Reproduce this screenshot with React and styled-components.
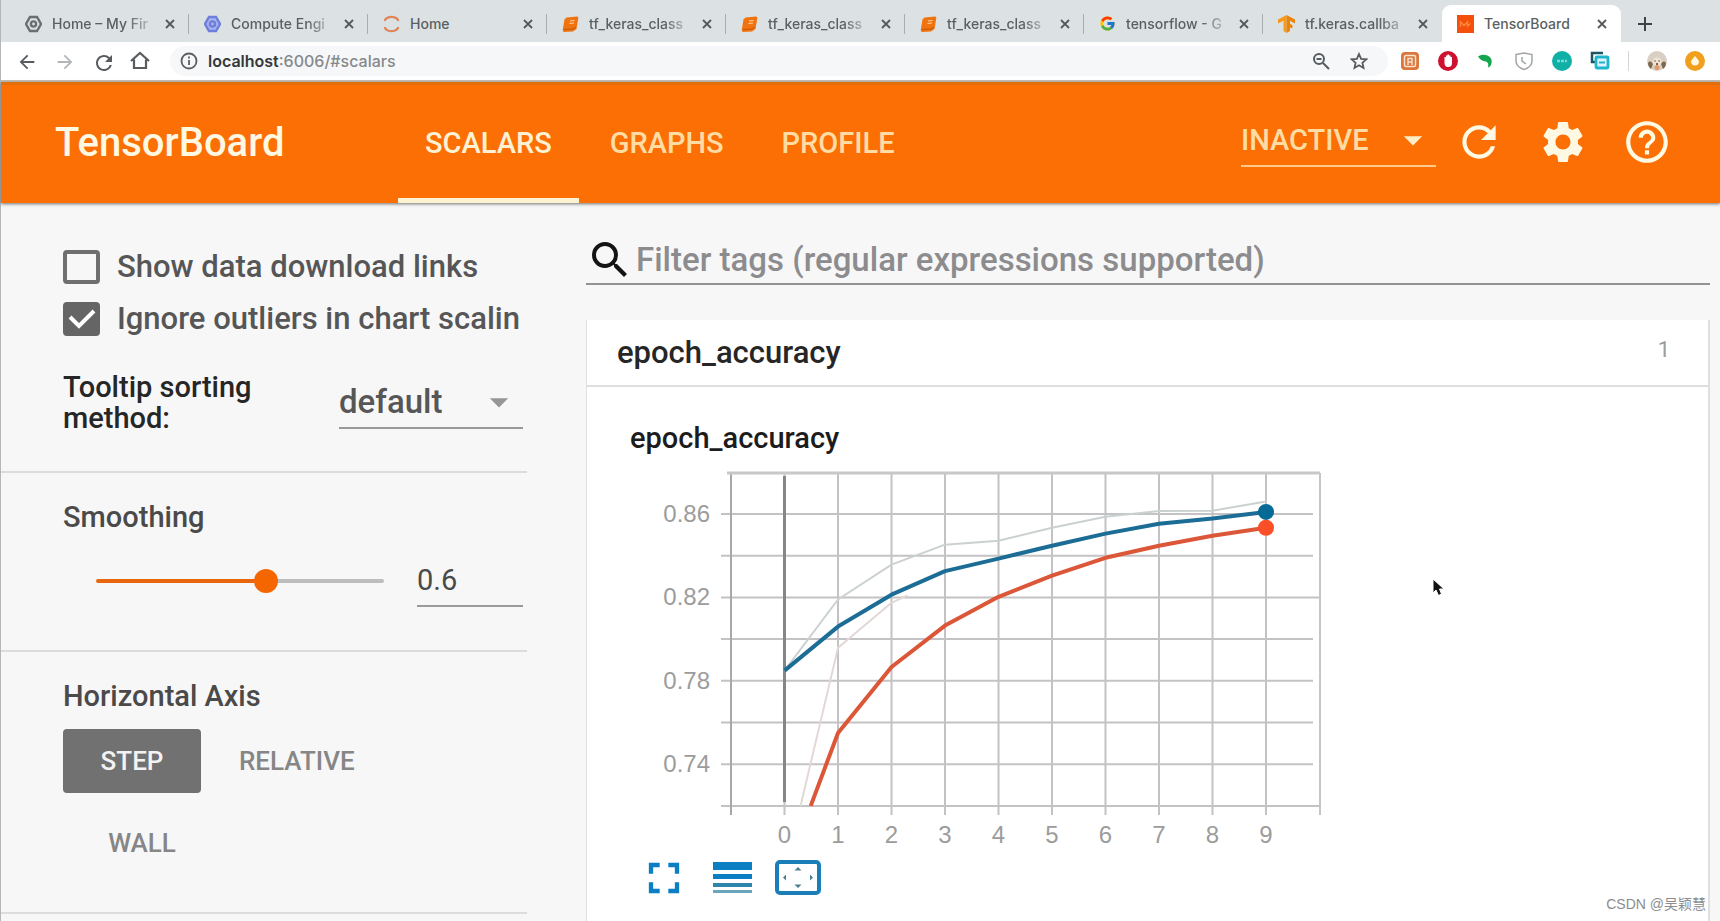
import React from "react";
import styled, { createGlobalStyle } from "styled-components";
import {
  MdRefresh,
  MdSettings,
  MdHelpOutline,
  MdSearch,
  MdArrowDropDown,
  MdArrowBack,
  MdArrowForward,
  MdFullscreen,
} from "react-icons/md";
import { FcGoogle } from "react-icons/fc";

const GlobalStyle = createGlobalStyle`
  *, *::before, *::after { box-sizing: border-box; }
  body {
    margin: 0;
    background: #f7f7f8;
    font-family: Roboto, "Liberation Sans", sans-serif;
    overflow: hidden;
  }
  button, input, select { font: inherit; color: inherit; margin: 0; }
  button { border: 0; padding: 0; background: none; }
  svg { display: block; flex: none; }
`;

const Window = styled.div`
  min-height: 100vh;
  display: flex;
  flex-direction: column;
  position: relative;
  border-left: 1px solid #b4b6b8;
`;

/* ---------- browser chrome ---------- */

const TabStrip = styled.nav`
  height: 42px;
  flex: none;
  display: flex;
  align-items: flex-end;
  padding-left: 9px;
  background: #dce2e3;
  font-family: Inter, "Liberation Sans", sans-serif;
`;

const BrowserTab = styled.div`
  flex: 0 1 179px;
  min-width: 0;
  height: 37px;
  padding: 0 0 0 15px;
  display: flex;
  align-items: center;
  gap: 10px;
  border-radius: 9px 9px 0 0;
  background: ${(p) => (p.$active ? "#fff" : "transparent")};
`;

const TabTitle = styled.a`
  flex: 1;
  min-width: 0;
  overflow: hidden;
  white-space: nowrap;
  font-size: 14px;
  font-weight: 500;
  line-height: 20px;
  color: #5a5f62;
  text-decoration: none;
  mask-image: ${(p) => (p.$fade ? "linear-gradient(to right, #000 75%, rgba(0, 0, 0, 0.2))" : "none")};
`;

const TabClose = styled.button`
  display: grid;
  place-items: center;
  width: 16px;
  height: 20px;
  color: #54595c;
`;

const TabDivider = styled.span`
  width: 1px;
  height: 20px;
  background: ${(p) => (p.$hidden ? "transparent" : "#a9afb1")};
`;

const NewTab = styled.button`
  width: 48px;
  height: 37px;
  display: grid;
  place-items: center;
  color: #3d4143;
`;

const AddressBar = styled.div`
  height: 40px;
  flex: none;
  display: flex;
  align-items: center;
  gap: 18px;
  padding: 0 15px;
  background: #fff;
  border-bottom: 2px solid #c3bfb9;
`;

const ChromeButton = styled.button`
  width: 20px;
  height: 20px;
  display: grid;
  place-items: center;
  flex: none;
  color: ${(p) => (p.$dim ? "#b3b6b8" : "#585c5f")};
`;

const Omnibox = styled.div`
  flex: 1;
  min-width: 0;
  height: 30px;
  margin-left: 2px;
  padding: 0 19px 0 10px;
  display: flex;
  align-items: center;
  gap: 18px;
  border-radius: 15px;
  background: #f6f7f8;
  color: #5b5f62;
`;

const SiteAddress = styled.div`
  flex: 1;
  display: flex;
  align-items: center;
  gap: 10px;
  font-family: Inter, "Liberation Sans", sans-serif;
  font-size: 16px;
  line-height: 20px;
  font-weight: 500;
  color: #85898c;
  b { font-weight: 600; color: #35383a; }
`;

const Extensions = styled.div`
  display: flex;
  align-items: center;
  gap: 18px;
  margin-left: -6px;
`;

const ExtensionDivider = styled.span`
  width: 1px;
  height: 20px;
  background: #d3d5d6;
`;

/* ---------- TensorBoard header ---------- */

const Header = styled.header`
  height: 121px;
  flex: none;
  position: relative;
  z-index: 1;
  display: flex;
  align-items: center;
  padding: 0 48px 0 54px;
  border-top: 3px solid #e26f0c;
  background: #fb6f05;
  box-shadow: 0 1px 3px rgba(70, 70, 70, 0.75);
  color: #fff8e2;
`;

const Brand = styled.h1`
  margin: 0 0 2px;
  width: 343px;
  font-size: 40px;
  font-weight: 500;
  line-height: 44px;
`;

const Dashboards = styled.nav`
  align-self: stretch;
  display: flex;
  flex: 1;
  gap: 4px;
`;

const DashboardLink = styled.a`
  display: flex;
  align-items: center;
  padding: 0 27px 2px;
  border-top: 5px solid transparent;
  border-bottom: 5px solid ${(p) => (p.$active ? "#fdf3d2" : "transparent")};
  color: ${(p) => (p.$active ? "#fff2d4" : "#ffdca4")};
  font-size: 29px;
  font-weight: 500;
  line-height: 32px;
  text-decoration: none;
`;

const RunState = styled.label`
  width: 195px;
  height: 52px;
  margin: 0 18px 6px 0;
  display: flex;
  align-items: center;
  position: relative;
  border-bottom: 2px solid #ffc98a;
  color: #ffdca4;
  font-size: 29px;
  font-weight: 500;
  svg { position: absolute; right: 1px; color: #ffeec8; pointer-events: none; }
`;

const BareSelect = styled.select`
  appearance: none;
  width: 100%;
  border: 0;
  padding: 0;
  background: transparent;
  line-height: 38px;
  outline: 0;
`;

const HeaderActions = styled.div`
  display: flex;
  gap: 34px;
  margin-bottom: 4px;
`;

const HeaderAction = styled.button`
  width: 50px;
  height: 50px;
`;

/* ---------- sidebar ---------- */

const Body = styled.div`
  flex: 1;
  display: flex;
`;

const Sidebar = styled.aside`
  width: 526px;
  flex: none;
  color: #4a4a4a;
`;

const Section = styled.section`
  padding: ${(p) => p.$top}px 4px ${(p) => p.$bottom}px 62px;
  border-bottom: 2px solid #dcdcdc;
`;

const CheckRow = styled.label`
  display: flex;
  align-items: center;
  gap: 17px;
  height: 34px;
  margin-bottom: 18px;
  position: relative;
  font-size: 31px;
  font-weight: 500;
  line-height: 34px;
  white-space: nowrap;
  color: #565656;
  svg { position: absolute; left: 4px; top: 4px; pointer-events: none; }
`;

const CheckBox = styled.input`
  appearance: none;
  flex: none;
  width: 37px;
  height: 34px;
  border: 4px solid #6f6f6f;
  border-radius: 4px;
  &:checked { background: #656565; border-color: #656565; }
`;

const SortRow = styled.label`
  display: flex;
  align-items: center;
  justify-content: space-between;
  margin-top: 36px;
`;

const SortLabel = styled.span`
  width: 220px;
  font-size: 29px;
  font-weight: 500;
  line-height: 31px;
  color: #262626;
`;

const SortSelect = styled.span`
  width: 184px;
  height: 51px;
  display: flex;
  align-items: center;
  position: relative;
  border-bottom: 2px solid #9a9a9a;
  font-size: 33px;
  font-weight: 500;
  color: #565656;
  svg { position: absolute; right: 2px; color: #969696; pointer-events: none; }
`;

const SectionTitle = styled.h2`
  margin: 0;
  font-size: 29px;
  font-weight: 500;
  line-height: 32px;
  color: #4a4a4a;
`;

const SmoothingRow = styled.div`
  display: flex;
  align-items: center;
  justify-content: space-between;
  margin-top: 22px;
  padding-left: 33px;
`;

const Slider = styled.input`
  appearance: none;
  width: 288px;
  height: 26px;
  background: transparent;
  &::-webkit-slider-runnable-track {
    height: 4px;
    border-radius: 2px;
    background: linear-gradient(to right, #e8660c 60%, #bdbdbd 60%);
  }
  &::-webkit-slider-thumb {
    appearance: none;
    width: 24px;
    height: 24px;
    margin-top: -10px;
    border-radius: 50%;
    background: #f56600;
  }
`;

const SmoothingValue = styled.input`
  width: 106px;
  height: 52px;
  border: 0;
  border-bottom: 2px solid #9a9a9a;
  padding: 0;
  background: transparent;
  font-size: 29px;
`;

const AxisButtons = styled.div`
  display: flex;
  flex-wrap: wrap;
  gap: 18px 0;
  margin-top: 17px;
`;

const AxisButton = styled.button`
  min-width: 138px;
  height: 64px;
  padding: 0 28px;
  margin-left: ${(p) => (p.$selected ? 0 : 10)}px;
  border-radius: 4px;
  background: ${(p) => (p.$selected ? "#717171" : "transparent")};
  color: ${(p) => (p.$selected ? "#f3f3f3" : "#868686")};
  font-size: 26px;
  font-weight: 500;
`;

/* ---------- main pane ---------- */

const Main = styled.main`
  flex: 1;
  min-width: 0;
  display: flex;
  flex-direction: column;
  margin: 33px 10px 0 59px;
`;

const Filter = styled.label`
  height: 49px;
  display: flex;
  align-items: center;
  gap: 2px;
  border-bottom: 2px solid #939396;
  color: #141414;
`;

const FilterInput = styled.input`
  flex: 1;
  border: 0;
  padding: 0;
  background: transparent;
  outline: 0;
  font-size: 33px;
  font-weight: 500;
  line-height: 38px;
  &::placeholder { color: #8c8c8e; opacity: 1; }
`;

const Card = styled.section`
  flex: 1;
  margin-top: 35px;
  background: #fff;
  border: solid #e0e0e3;
  border-width: 0 2px 0 1px;
`;

const CardHeader = styled.header`
  height: 67px;
  display: flex;
  align-items: center;
  justify-content: space-between;
  padding: 0 38px 0 30px;
  border-bottom: 2px solid #dededf;
  h2 {
    margin: 0;
    font-size: 31px;
    font-weight: 500;
    line-height: 36px;
    color: #262626;
  }
`;

const TagCount = styled.span`
  font-size: 22px;
  line-height: 32px;
  padding-bottom: 6px;
  color: #9b9b9b;
`;

const ChartPane = styled.div`
  padding: 35px 42px 0 43px;
  h3 {
    margin: 0;
    font-size: 29px;
    font-weight: 500;
    line-height: 32px;
    color: #1c1c1c;
  }
`;

const ChartSvg = styled.svg`
  width: 700px;
  height: 396px;
  margin-top: 2px;
  text {
    font-family: "Liberation Sans", sans-serif;
    font-size: 24px;
    fill: #9c9c9c;
  }
`;

const ChartActions = styled.div`
  display: flex;
  align-items: center;
  gap: 23px;
  padding: 8px 0 0 8px;
  color: #0b7ec4;
  button { height: 36px; display: grid; place-items: center; align-content: center; }
`;

const Pointer = styled.svg`
  position: absolute;
  left: 1431px;
  top: 578px;
`;

const Watermark = styled.span`
  position: absolute;
  right: 14px;
  bottom: 6px;
  font-family: "Liberation Sans", "Noto Sans CJK SC", sans-serif;
  font-size: 14px;
  line-height: 22px;
  color: #8c8c8c;
`;

/* ---------- icons ---------- */

const Favicon = ({ kind }) => {
  if (kind === "google") return <FcGoogle size={17} />;
  return (
    <svg width="17" height="18" viewBox="0 0 17 18" fill="none">
      {(kind === "cloud" || kind === "engine") && (
        <g stroke={kind === "cloud" ? "#6a6f72" : "#6d7fdb"} strokeWidth="2.4">
          <path d="M5 2h7l4 7-4 7H5L1 9z" fill={kind === "cloud" ? "none" : "#a9b4ee"} />
          <circle cx="8.5" cy="9" r="2.6" />
        </g>
      )}
      {kind === "jupyter" && (
        <g stroke="#e08658" strokeWidth="2.4" strokeLinecap="round">
          <path d="M2 5C4.500 .8 12.500 .8 15 5" />
          <path d="M2 13c2.500 4.200 10.500 4.200 13 0" />
        </g>
      )}
      {kind === "notebook" && (
        <g>
          <path d="M4.500 2.500 15 1.500q1.500 0 1.300 1.500L14.500 14 11 16.500 2 17Q.5 16.500.8 14.500L2.500 4.500z" fill="#f0730f" />
          <path d="M8 6l4.500-.5M7.500 8.500l4.500-.5" stroke="#fbd0a0" strokeWidth="1.200" />
          <path d="M2 14.500l9-.5 3-2" stroke="#c2580a" strokeWidth="1" />
        </g>
      )}
      {kind === "tensorflow" && (
        <g>
          <path d="M8.500 0 0 4.500v4l5.500-2.700V16l3 2z" fill="#f59a1b" />
          <path d="M8.500 0 17 4.500v4l-5-2.700v3l2.500 1.500v3L12 12.500V16l-3.500 2z" fill="#ea8408" />
        </g>
      )}
      {kind === "tensorboard" && (
        <g>
          <path d="M0 0h17v18H0z" fill="#f4500b" />
          <path d="M3.500 12V7l3.500 3.500L10.500 7v4l3-2.500" stroke="#ff8a3d" strokeWidth="1.400" />
        </g>
      )}
    </svg>
  );
};

const CrossIcon = () => (
  <svg width="10" height="10" viewBox="0 0 10 10" stroke="currentColor" strokeWidth="1.800">
    <path d="M1 1l8 8M9 1l-8 8" />
  </svg>
);

const FullSizeIcon = () => <MdFullscreen size={52} />;

const FitDomainIcon = () => (
  <svg width="46" height="36" viewBox="0 0 46 36" fill="none">
    <rect x="2" y="2" width="42" height="31" rx="3" stroke="#1a7fb8" strokeWidth="4" />
    <path d="M19.500 10.500h7L23 7zM19.500 24.500h7L23 28zM11 14.500v6L8 17.500zM35 14.500v6l3-3z" fill="#4c7f94" />
  </svg>
);

const LinesIcon = () => (
  <svg width="39" height="34" viewBox="0 0 39 34" fill="#0b7ec4">
    <path d="M0 1h39v8H0zM0 13h39v5H0z" />
    <path d="M0 22h39v4H0z" fill="#2f86ab" />
    <path d="M0 29h39v3H0z" fill="#6ba5bd" />
  </svg>
);

const ExtensionIcon = ({ kind }) => (
  <svg width="20" height="20" viewBox="0 0 20 20" fill="none">
    {kind === "frame" && (
      <g>
        <rect x="1" y="1" width="18" height="18" rx="4" fill="#d9773c" />
        <rect x="4.500" y="4.500" width="11" height="11" rx="1.500" stroke="#fbe3cf" strokeWidth="1.500" />
        <path d="M8 14V7.500h4V11H8M12 11v3" stroke="#fbe3cf" strokeWidth="1.400" />
      </g>
    )}
    {kind === "blocker" && (
      <g>
        <circle cx="10" cy="10" r="10" fill="#cf1130" />
        <path d="M6.500 9.500V6h1.500V4.500h1.500v-1H11V4.500h1.500V6H14v6c0 3-1.500 4-4 4s-3.500-2-3.500-4z" fill="#fff" />
      </g>
    )}
    {kind === "elephant" && <path d="M2 5.500C6 2.500 13 3.500 15 7.500c1.500 3.500.5 8-3 9 .5-3 .5-5-2-6C6 10 4 8.500 2 5.500z" fill="#17a550" />}
    {kind === "shield" && <path d="M2 3.500l8-1.500 8 1.500V10c0 4-3.500 7-8 8.500C5.500 17 2 14 2 10zM8 6v4l4 3" stroke="#a3a6a7" strokeWidth="1.500" />}
    {kind === "teal" && (
      <g>
        <circle cx="10" cy="10" r="10" fill="#11b0a6" />
        <path d="M5 10h10" stroke="#7bdbd5" strokeWidth="2.500" strokeDasharray="3 1" />
      </g>
    )}
    {kind === "copy" && (
      <g>
        <path d="M13 2H2v9h3" stroke="#1d5560" strokeWidth="2.500" />
        <rect x="6" y="6" width="12" height="11" rx="1" stroke="#1fb5cf" strokeWidth="2.800" fill="#dff5fa" />
        <path d="M9 11.500h6" stroke="#1fb5cf" strokeWidth="2" />
      </g>
    )}
    {kind === "avatar" && (
      <g>
        <circle cx="10" cy="10" r="10" fill="#d9cfc4" />
        <path d="M1 12c2-3 4-1 5 1l-2 5C2 16.500 1 14.500 1 12zM19 12c-2-3-4-1-5 1l2 5c2-1.500 3-3.500 3-6z" fill="#7d6a4e" />
        <circle cx="10" cy="11" r="4.500" fill="#f3e2d2" />
        <path d="M7.500 10h1M11.500 10h1M9 13h2" stroke="#4d3b33" strokeWidth="1.500" />
        <circle cx="10" cy="16.500" r="2.500" fill="#e29a67" />
      </g>
    )}
    {kind === "update" && (
      <g>
        <circle cx="10" cy="10" r="10" fill="#f0a01c" />
        <path d="M10 5l4 5c0 3-1.500 4.500-4 4.500S6 13 6 10z" fill="#fff8e2" />
      </g>
    )}
  </svg>
);

/* ---------- chart ---------- */

const LEFT = 101;
const TOP = 17;
const BOTTOM = 350;
const STEP = 53.5;
const xAt = (step) => LEFT + STEP * (step + 1);
const yAt = (value) => 58 + (0.86 - value) * 2085;
const toPoints = (rows) => rows.map(([step, v]) => `${xAt(step)},${yAt(v)}`).join(" ");

const validation = [0.7849, 0.806, 0.8213, 0.8326, 0.8386, 0.8448, 0.8506, 0.8553, 0.8578, 0.861].map((v, i) => [i, v]);
const validationRaw = [0.7849, 0.819, 0.8357, 0.8453, 0.8472, 0.8534, 0.8587, 0.8614, 0.8616, 0.866].map((v, i) => [i, v]);
const training = [[0.49, 0.72], [1, 0.755], [2, 0.7866], [3, 0.8065], [4, 0.8203], [5, 0.8304], [6, 0.839], [7, 0.8448], [8, 0.8496], [9, 0.8534]];
const trainingRaw = [[0.3, 0.72], [1, 0.7958], [2, 0.8174], [2.3, 0.821]];
const gridValues = [0.86, 0.84, 0.82, 0.8, 0.78, 0.76, 0.74, 0.72];
const labelValues = [0.86, 0.82, 0.78, 0.74];
const steps = [0, 1, 2, 3, 4, 5, 6, 7, 8, 9];

const AccuracyChart = () => (
  <ChartSvg viewBox="0 0 700 396" role="img" aria-label="epoch_accuracy by step">
    <g stroke="#c4c2c4" strokeWidth="2">
      {gridValues.map((v) => (
        <path key={v} d={`M91 ${yAt(v)}H${v === 0.82 || v === 0.72 ? 690 : 683}`} />
      ))}
      {steps.map((s) => (
        <path key={s} d={`M${xAt(s)} ${TOP}V359`} />
      ))}
      <path d={`M${LEFT} ${TOP}V359`} stroke="#a8a8a8" />
      <path d={`M690 ${TOP}V359`} stroke="#c6c6c6" />
      <path d={`M97 ${TOP}H690`} stroke="#c8c8c8" strokeWidth="3" />
      <path d={`M${xAt(0)} ${TOP + 3}V${BOTTOM - 4}`} stroke="#868686" strokeWidth="3" />
    </g>
    <g fill="none" strokeLinejoin="round">
      <polyline points={toPoints(trainingRaw)} stroke="#e2d8d6" strokeWidth="2" />
      <polyline points={toPoints(validationRaw)} stroke="#cbd1d1" strokeWidth="2" />
      <polyline points={toPoints(validation)} stroke="#1c6d96" strokeWidth="4" />
      <polyline points={toPoints(training)} stroke="#dc5638" strokeWidth="4" />
    </g>
    <circle cx={xAt(9)} cy={yAt(0.861)} r="8" fill="#066a96" />
    <circle cx={xAt(9)} cy={yAt(0.8534)} r="8" fill="#fb4f28" />
    {labelValues.map((v) => (
      <text key={v} x="80" y={yAt(v) + 8} textAnchor="end">{v.toFixed(2)}</text>
    ))}
    {steps.map((s) => (
      <text key={s} x={xAt(s)} y="387" textAnchor="middle">{s}</text>
    ))}
  </ChartSvg>
);

const browserTabs = [
  ["cloud", "Home – My Fir", true],
  ["engine", "Compute Engi", true],
  ["jupyter", "Home", false],
  ["notebook", "tf_keras_class", true],
  ["notebook", "tf_keras_class", true],
  ["notebook", "tf_keras_class", true],
  ["google", "tensorflow - G", true],
  ["tensorflow", "tf.keras.callba", true],
  ["tensorboard", "TensorBoard", false],
];

export default function App() {
  const last = browserTabs.length - 1;
  return (
    <Window>
      <GlobalStyle />
      <TabStrip aria-label="Browser tabs">
        {browserTabs.map(([kind, title, fade], i) => (
          <BrowserTab key={i} $active={i === last}>
            <Favicon kind={kind} />
            <TabTitle href="#" $fade={fade}>{title}</TabTitle>
            <TabClose aria-label="Close tab"><CrossIcon /></TabClose>
            <TabDivider $hidden={i >= last - 1} />
          </BrowserTab>
        ))}
        <NewTab aria-label="New tab">
          <svg width="14" height="14" viewBox="0 0 14 14" stroke="currentColor" strokeWidth="2">
            <path d="M7 0v14M0 7h14" />
          </svg>
        </NewTab>
      </TabStrip>

      <AddressBar>
        <ChromeButton aria-label="Back"><MdArrowBack size={22} /></ChromeButton>
        <ChromeButton aria-label="Forward" $dim><MdArrowForward size={22} /></ChromeButton>
        <ChromeButton aria-label="Reload"><MdRefresh size={24} /></ChromeButton>
        <ChromeButton aria-label="Home">
          <svg width="20" height="20" viewBox="0 0 20 20" fill="none" stroke="currentColor" strokeWidth="2.200">
            <path d="M1 10l9-8 9 8M4 8.500V17h12V8.500" />
          </svg>
        </ChromeButton>
        <Omnibox>
          <SiteAddress>
            <svg width="18" height="18" viewBox="0 0 18 18" fill="none" stroke="#5b5f62" strokeWidth="1.800">
              <circle cx="9" cy="9" r="7.500" />
              <path d="M9 8v5M9 4.500v2" />
            </svg>
            <span><b>localhost</b>:6006/#scalars</span>
          </SiteAddress>
          <ChromeButton aria-label="Zoom">
            <svg width="18" height="18" viewBox="0 0 18 18" fill="none" stroke="currentColor" strokeWidth="2">
              <circle cx="7" cy="7" r="5" />
              <path d="M11 11l6 6M4.500 7h5" />
            </svg>
          </ChromeButton>
          <ChromeButton aria-label="Bookmark">
            <svg width="18" height="18" viewBox="0 0 18 18" fill="none" stroke="currentColor" strokeWidth="1.800">
              <path d="M9 2l2.100 4.800 5.200.5-3.900 3.500 1.100 5.100L9 13.200l-4.500 2.700 1.100-5.100L1.700 7.300l5.200-.5z" />
            </svg>
          </ChromeButton>
        </Omnibox>
        <Extensions>
          {["frame", "blocker", "elephant", "shield", "teal", "copy"].map((kind) => (
            <ChromeButton key={kind} aria-label={kind}><ExtensionIcon kind={kind} /></ChromeButton>
          ))}
          <ExtensionDivider />
          <ChromeButton aria-label="Profile"><ExtensionIcon kind="avatar" /></ChromeButton>
          <ChromeButton aria-label="Menu"><ExtensionIcon kind="update" /></ChromeButton>
        </Extensions>
      </AddressBar>

      <Header>
        <Brand>TensorBoard</Brand>
        <Dashboards>
          <DashboardLink href="#scalars" $active>SCALARS</DashboardLink>
          <DashboardLink href="#graphs">GRAPHS</DashboardLink>
          <DashboardLink href="#profile">PROFILE</DashboardLink>
        </Dashboards>
        <RunState>
          <BareSelect aria-label="Inactive dashboards"><option>INACTIVE</option></BareSelect>
          <MdArrowDropDown size={44} />
        </RunState>
        <HeaderActions>
          <HeaderAction aria-label="Reload data"><MdRefresh size={50} /></HeaderAction>
          <HeaderAction aria-label="Settings"><MdSettings size={50} /></HeaderAction>
          <HeaderAction aria-label="Help"><MdHelpOutline size={50} /></HeaderAction>
        </HeaderActions>
      </Header>

      <Body>
        <Sidebar>
          <Section $top={47} $bottom={37}>
            <CheckRow>
              <CheckBox type="checkbox" />
              Show data download links
            </CheckRow>
            <CheckRow>
              <CheckBox type="checkbox" defaultChecked />
              <svg width="30" height="26" viewBox="0 0 30 26" fill="none" stroke="#fff" strokeWidth="4">
                <path d="M3 11l9 9L27 5" />
              </svg>
              Ignore outliers in chart scalin
            </CheckRow>
            <SortRow>
              <SortLabel>Tooltip sorting method:</SortLabel>
              <SortSelect>
                <BareSelect><option>default</option></BareSelect>
                <MdArrowDropDown size={44} />
              </SortSelect>
            </SortRow>
          </Section>
          <Section $top={28} $bottom={43}>
            <SectionTitle>Smoothing</SectionTitle>
            <SmoothingRow>
              <Slider type="range" min="0" max="1" step="0.1" defaultValue="0.6" aria-label="Smoothing" />
              <SmoothingValue type="text" defaultValue="0.6" aria-label="Smoothing value" />
            </SmoothingRow>
          </Section>
          <Section $top={28} $bottom={37}>
            <SectionTitle>Horizontal Axis</SectionTitle>
            <AxisButtons>
              <AxisButton $selected>STEP</AxisButton>
              <AxisButton>RELATIVE</AxisButton>
              <AxisButton>WALL</AxisButton>
            </AxisButtons>
          </Section>
        </Sidebar>

        <Main>
          <Filter>
            <MdSearch size={48} />
            <FilterInput type="text" aria-label="Filter tags" placeholder="Filter tags (regular expressions supported)" />
          </Filter>
          <Card>
            <CardHeader>
              <h2>epoch_accuracy</h2>
              <TagCount>1</TagCount>
            </CardHeader>
            <ChartPane>
              <h3>epoch_accuracy</h3>
              <AccuracyChart />
              <ChartActions>
                <button aria-label="Toggle full size"><FullSizeIcon /></button>
                <button aria-label="Toggle log scale"><LinesIcon /></button>
                <button aria-label="Fit domain to data"><FitDomainIcon /></button>
              </ChartActions>
            </ChartPane>
          </Card>
        </Main>
      </Body>

      <Pointer width="13" height="19" viewBox="0 0 13 19">
        <path d="M1 1v14l3-3 2.500 5.500 3-1.500L7.500 11H12z" fill="#111" stroke="#fff" strokeWidth="1" />
      </Pointer>
      <Watermark>CSDN @吴颖慧</Watermark>
    </Window>
  );
}
